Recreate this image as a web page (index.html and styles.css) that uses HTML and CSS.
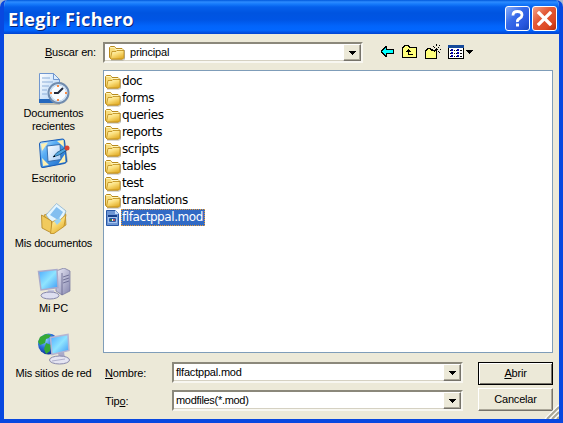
FILE: index.html
```html
<!DOCTYPE html>
<html lang="es">
<head>
<meta charset="utf-8">
<title>Elegir Fichero</title>
<link rel="stylesheet" href="styles.css">
</head>
<body>
<svg class="defs" width="0" height="0">
<defs>
<linearGradient id="gold" x1="0" y1="0" x2="0.6" y2="1"><stop offset="0" stop-color="#fffbd0"/><stop offset=".5" stop-color="#fbdf7c"/><stop offset="1" stop-color="#e3b02e"/></linearGradient>
<linearGradient id="paper" x1="0" y1="0" x2="1" y2="1"><stop offset="0" stop-color="#fff"/><stop offset="1" stop-color="#a4cbf5"/></linearGradient>
<linearGradient id="screen" x1="0" y1="0" x2="1" y2="1"><stop offset="0" stop-color="#4ba8ff"/><stop offset=".5" stop-color="#8fe4ff"/><stop offset="1" stop-color="#3c96f5"/></linearGradient>
<linearGradient id="desk" x1="0" y1="0" x2="1" y2="1"><stop offset="0" stop-color="#ddf3ff"/><stop offset=".35" stop-color="#5aaef5"/><stop offset="1" stop-color="#1461c4"/></linearGradient>
<linearGradient id="metal" x1="0" y1="0" x2="1" y2="1"><stop offset="0" stop-color="#eeeefa"/><stop offset="1" stop-color="#8485ad"/></linearGradient>
<radialGradient id="globe" cx=".35" cy=".3" r=".75"><stop offset="0" stop-color="#8fd0ff"/><stop offset=".5" stop-color="#2b70dc"/><stop offset="1" stop-color="#0b2d91"/></radialGradient>
<symbol id="folder" viewBox="0 0 16 16">
<path d="M2 15h12.500l1-1V5" fill="none" stroke="#8d8b80" stroke-opacity=".65"/>
<path d="M.5 12.500v-10l1-1h4l1.500 2h6l1 1v8.500l-1 1h-11z" fill="#f7dc7c" stroke="#b98a1c"/>
<path d="M1.500 3V2.500h4l1 2h7" fill="none" stroke="#fff6bd"/>
<path d="M1.500 13.500l1.500-7h4l1-1h7v7l-1 1.500h-12z" fill="url(#gold)" stroke="#bd8b18" stroke-width=".8"/>
</symbol>
<symbol id="arrow" viewBox="0 0 7 4"><path d="M0 0h7v1H6v1H5v1H4v1H3V3H2V2H1V1H0z"/></symbol>
</defs>
</svg>
<div class="window">
  <header class="titlebar">
    <h1>Elegir Fichero</h1>
    <button class="cap help"><svg width="21" height="21"><path d="M6 7.500q0-4 4.500-4t4.500 3.500q0 2-2.500 3.500T10.500 14" fill="none" stroke="#fff" stroke-width="2.800"/><path d="M9 15.500h3v3H9z" fill="#fff"/></svg></button>
    <button class="cap close"><svg width="21" height="21"><path d="M5 5l11 11m0-11L5 16" stroke="#fff" stroke-width="3.200" stroke-linecap="square"/></svg></button>
  </header>
  <main class="body">
    <div class="lookin">
      <span class="label"><u>B</u>uscar en:</span>
      <div class="combo dir"><svg class="folder" width="16" height="16"><use href="#folder"/></svg><span class="value">principal</span><button class="drop"><svg width="7" height="4"><use href="#arrow"/></svg></button></div>
      <svg class="tool back" width="13" height="11" shape-rendering="crispEdges"><path d="M4 0h2v3h7v5H6v3H4v-1H3V9H2V8H1V7H0V4h1V3h1V2h1V1h1z"/><path d="M4 2h1v2h7v3H5v2H4V8H3V7H2V6H1V5h1V4h1V3h1z" fill="#0ff"/></svg>
      <svg class="tool up" width="15" height="14" shape-rendering="crispEdges"><path d="M.5 12.500v-10h1v-1h1v-1h4v1h1v1h7v10z" fill="#ffff7b" stroke="#000"/><path d="M6 4h1v1h1v1h1v1H7v2h4v1H6V7H4V6h1V5h1z"/></svg>
      <svg class="tool new" width="17" height="16" shape-rendering="crispEdges"><path d="M.5 14.500v-8h1v-1h1v-1h3v1h1v1h5v8z" fill="#ffff7b" stroke="#000"/><path d="M11 0h1v2h-1zM11 8h1v2h-1zM11 4h1v3h-1zM10 5h3v1h-3zM6 5h2v1H6zM15 5h1v1h-1zM8 2h1v1H8zM9 3h1v1H9zM14 1h1v1h-1zM13 3h1v1h-1zM13 7h1v1h-1zM14 8h1v1h-1zM9 7h1v1H9z"/></svg>
      <svg class="tool view" width="25" height="14" shape-rendering="crispEdges"><path d="M.5.5h15v13H.5z" fill="#fff" stroke="#000"/><path d="M0 0h16v3H0z" fill="#164a9b"/><path d="M3 4h2v2H3zM9 4h2v2H9zM3 7h2v2H3zM9 7h2v2H9zM3 10h2v2H3zM9 10h2v2H9z" fill="#00a"/><path d="M2 5h1v1H2zM8 5h1v1H8zM2 8h1v1H2zM8 8h1v1H8zM2 11h1v1H2zM8 11h1v1H8zM6 5h1v1H6zM12 5h2v1h-2zM6 8h1v1H6zM12 8h2v1h-2zM6 11h1v1H6zM12 11h2v1h-2z"/><use href="#arrow" x="18" y="5" width="7" height="4"/></svg>
    </div>
    <nav class="places">
      <a class="place tall"><svg width="32" height="32"><path d="M2 31h20l1-22" stroke="#9a988c" fill="none"/><path d="M1.500.5h14l6 6v23h-20z" fill="url(#paper)" stroke="#7197cf"/><path d="M1 26h21v4H1z" fill="#2468bd"/><path d="M15.500.5v6h6z" fill="#dceeff" stroke="#7197cf"/><path d="M4 5h8M4 9h11M4 13h7M4 17h5M4 21h5" stroke="#8daed8"/><circle cx="20.500" cy="20" r="10" fill="#e9f5ff" stroke="#718cae" stroke-width="2"/><circle cx="20.500" cy="20" r="8" fill="#f7fbff" stroke="#b9d4ef"/><path d="M20 12v2m0 12v2m-8-8h2m13 0h2" stroke="#fa8a43" stroke-width="2"/><path d="M25 15l-5 5h-4" stroke="#222a3c" stroke-width="2" fill="none"/></svg><span class="docs">Documentos<br>recientes</span></a>
      <a class="place"><svg width="32" height="32"><path d="M3 5l24-3 3 22-24 6z" fill="#85918f" opacity=".6"/><path d="M1.500 6q0-2 2-2l21-3q2 0 2 2l2 20q0 2-2 2.500L5 29.500q-2 .5-2-2z" fill="url(#desk)" stroke="#165bb6"/><path d="M3 6l7-1.500L4 13zM19 3l6.500-1 .5 7zM4 20l7 7-6 1zM27 16l.5 8-7 1.500z" fill="#fff0b0"/><path d="M9 8l13-1.500 1 15-13 2z" fill="url(#paper)" stroke="#386fae"/><path d="M15 19l4-4.500 8-4.500 2 2-8 5z" fill="#51a5de" stroke="#17507f" stroke-width=".8"/><path d="M15 19l2-2v2z"/><circle cx="29" cy="10" r="2.500" fill="#d84535"/></svg><span class="esc">Escritorio</span></a>
      <a class="place"><svg width="32" height="32"><path d="M6 12l6-2 4 1 11-4 1 15-14 8z" fill="#f3c84f" stroke="#ac8227" stroke-width=".7"/><path d="M8 12L18.500.5 28 8l-4 10-10 2z" fill="#e3f5ff" stroke="#8cb4d2" stroke-width=".8"/><path d="M12 12l6.500-8 6.500 5-5 8z" fill="#83bff0"/><path d="M3.500 12l10 6v12L4 25z" fill="#f1ca5d" stroke="#af8322" stroke-width=".8"/><path d="M12.500 30.500L14 19l4-2 3 1 7-6.500-2 12-10 7z" fill="url(#gold)" stroke="#bd8c22" stroke-width=".8"/><path d="M16 18l6-3 1 3-4 4z" fill="#9bd4f3"/></svg><span class="mis">Mis documentos</span></a>
      <a class="place"><svg width="34" height="32"><path d="M19 3l8-3 6 3v20l-8 4-6-4z" fill="url(#metal)" stroke="#73749c" stroke-width=".7"/><path d="M25 5v22M26 9l6-2M26 12l6-2M26 15l6-2" stroke="#62638b" stroke-width=".8"/><path d="M1.500 3.500L20 1.500l1 18-17 2.500z" fill="url(#screen)" stroke="#aaaacb" stroke-width="1.500"/><path d="M11 22h6l1 4h-8z" fill="#c7c8df"/><ellipse cx="13" cy="27.500" rx="9" ry="3.500" fill="#dedff0" stroke="#8586aa"/></svg><span class="pc">Mi PC</span></a>
      <a class="place"><svg width="34" height="32"><circle cx="11.500" cy="11" r="10.500" fill="url(#globe)"/><path d="M3 4l6-3 5 1-2 3-3 1-1 4-5 2-2-3zM9 10l5 2-1 6-4 3-2-5z" fill="#35a936"/><path d="M13.500 4.500L31 1.500l1 16-17 4z" fill="url(#screen)" stroke="#b5b5d2" stroke-width="1.500"/><path d="M21 20l6-1 1 6h-6z" fill="#a9aac9"/><ellipse cx="22.500" cy="27" rx="10" ry="4" fill="#e5e5f2" stroke="#8889ac"/><path d="M15 28l13-2" stroke="#b0b0cb"/></svg><span class="red">Mis sitios de red</span></a>
    </nav>
    <ul class="files">
      <li><svg width="16" height="16"><use href="#folder"/></svg><span>doc</span></li>
      <li><svg width="16" height="16"><use href="#folder"/></svg><span>forms</span></li>
      <li><svg width="16" height="16"><use href="#folder"/></svg><span>queries</span></li>
      <li><svg width="16" height="16"><use href="#folder"/></svg><span>reports</span></li>
      <li><svg width="16" height="16"><use href="#folder"/></svg><span>scripts</span></li>
      <li><svg width="16" height="16"><use href="#folder"/></svg><span>tables</span></li>
      <li><svg width="16" height="16"><use href="#folder"/></svg><span>test</span></li>
      <li><svg width="16" height="16"><use href="#folder"/></svg><span>translations</span></li>
      <li class="selected"><svg width="16" height="16"><path d="M1.500.5h9l3 3v12h-12z" fill="#6e96d4" stroke="#2858a6"/><path d="M10 0v4h4z" fill="#c7dcf7"/><path d="M3 5h9v8H3z" fill="#a9c7ef"/><path d="M3 5h9v2H3z" fill="#173f8b"/><path d="M4.500 8.500h6v3h-6z" fill="#e9f3ff" stroke="#2858a6"/><path d="M5 9h2v2H5z" fill="#397849"/><path d="M8 9h2v2H8z" fill="#b54f5d"/></svg><span>flfactppal.mod</span></li>
    </ul>
    <div class="fields">
      <span class="label name"><u>N</u>ombre:</span>
      <div class="combo"><span class="value file">flfactppal.mod</span><button class="drop"><svg width="7" height="4"><use href="#arrow"/></svg></button></div>
      <span class="label type">Tip<u>o</u>:</span>
      <div class="combo"><span class="value filter">modfiles(*.mod)</span><button class="drop"><svg width="7" height="4"><use href="#arrow"/></svg></button></div>
    </div>
    <div class="actions"><button class="push default"><span><u>A</u>brir</span></button><button class="push"><span>Cancelar</span></button></div>
  </main>
  <svg class="grip" width="15" height="15"><path d="M1 15L15 1M6 15l9-9M11 15l4-4" stroke="#fff" stroke-width="1.500"/><path d="M3 15L15 3M8 15l7-7M13 15l2-2" stroke="#aaa798" stroke-width="2"/></svg>
</div>
</body>
</html>
```
FILE: styles.css
```css
* { box-sizing: border-box; }
body { margin: 0; overflow: hidden; background: #a9b8d2; font: 11px/13px "Liberation Sans", sans-serif; letter-spacing: -0.2px; color: #000; }
button { padding: 0; font: inherit; color: inherit; letter-spacing: inherit; }
u { text-decoration-thickness: 1px; text-underline-offset: 1px; }
svg { display: block; flex: none; }
.defs { position: absolute; }
.window { position: relative; width: 563px; height: 423px; overflow: hidden; border-radius: 7px 7px 0 0; background: #ece9d8; border: solid #0848e0; border-width: 0 4px 4px; }
.window::after { content: ""; position: absolute; inset: 30px -4px -4px; border: solid #001ea0; border-width: 0 2px 2px 1px; pointer-events: none; }
.titlebar { display: flex; align-items: center; gap: 2px; height: 34px; margin: 0 -4px; padding: 5px 6px 2px 8px; background: linear-gradient(#0058dc 0, #2d8cff 2px, #167bfb 4px, #0560ec 7px, #0054e0 13px, #0055e5 20px, #0264fb 26px, #0267ff 30px, #0042d0 34px); }
.titlebar h1 { flex: 1; margin: 1px 0 0; font: bold 18px/24px "Open Sans", sans-serif; letter-spacing: 0.33px; color: #fff; text-shadow: 1px 1px #092374; white-space: nowrap; }
.cap { display: grid; place-items: center; width: 25px; height: 25px; border: 1px solid #fff; border-radius: 3px; }
.help { background: linear-gradient(135deg, #89aef8, #386cea 40%, #2857df 75%, #1746bd); }
.close { background: linear-gradient(135deg, #f5a187, #e25a38 40%, #dd4822 75%, #b52b08); }
.body { display: grid; grid-template: 36px 283px 66px / 99px 359px 91px; }
.lookin { grid-column: 1 / 4; display: flex; align-items: flex-start; padding-top: 8px; }
.lookin .label { width: 92px; padding-top: 4px; text-align: right; }
.label, .value, .place, .push { white-space: nowrap; }
.combo { display: flex; align-items: center; height: 21px; padding-left: 2px; background: #fff; border: 2px solid; border-color: #8b887b #f8f7f1 #f8f7f1 #8b887b; box-shadow: inset -1px -1px #d5d1c2; }
.combo.dir { width: 260px; margin-left: 7px; padding-left: 4px; }
.value { flex: 1; }
.dir .value { padding-left: 5px; }
.drop { display: grid; place-items: center; width: 18px; height: 17px; background: #ece9d8; border: 1px solid; border-color: #fff #76736a #76736a #fff; box-shadow: inset -1px -1px #aca899; }
.back { margin: 4px 0 0 18px; }
.up { margin: 3px 0 0 8px; }
.new { margin: 2px 0 0 8px; }
.view { margin: 3px 0 0 6px; }
.places { display: flex; flex-direction: column; grid-row: 2 / 4; padding-top: 3px; }
.place { display: flex; flex-direction: column; align-items: center; height: 65px; text-align: center; }
.place svg { margin-bottom: 2px; }
.files { grid-column: 2 / 4; width: 450px; height: 283px; margin: 0; padding: 2px 1px; list-style: none; background: #fff; border: 1px solid #7f9db9; }
.files li { display: flex; align-items: center; height: 17px; }
.files span { height: 17px; padding: 0 2px 0 1px; font: 12px/16px "DejaVu Sans", sans-serif; letter-spacing: -0.42px; }
.selected span { color: #fff; background: #316ac5; outline: 1px dotted #e59b3a; outline-offset: -1px; }
.fields { display: grid; grid-template: 21px 21px / 67px 291px; align-content: start; row-gap: 7px; padding: 9px 0 0 2px; }
.fields .label { padding-top: 5px; }
.label { letter-spacing: -0.15px; }
.filter { letter-spacing: -0.3px; }
.actions { display: flex; flex-direction: column; gap: 3px; padding: 9px 0 0 16px; }
.push { width: 75px; height: 23px; background: #ece9d8; border: 1px solid; border-color: #fff #76736a #76736a #fff; box-shadow: inset -1px -1px #aca899; }
.default { border-color: #000; box-shadow: inset 1px 1px #fff, inset -1px -1px #76736a; }
.grip { position: absolute; right: 0; bottom: 0; }
```
